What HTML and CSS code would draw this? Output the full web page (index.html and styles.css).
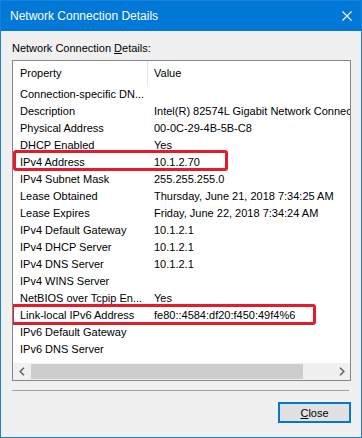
FILE: index.html
```html
<!DOCTYPE html>
<html lang="en">
<head>
    <meta charset="UTF-8">
    <meta name="viewport" content="width=device-width, initial-scale=1.0">
    <title>Network Connection Details</title>
    <link rel="stylesheet" href="styles.css">
</head>
<body>
    <div class="window">
        <div class="titlebar">
            <span class="title">Network Connection Details</span>
            <svg class="close-x" width="10" height="10" viewBox="0 0 10 10">
                <path d="M0.5 0.5 L9.5 9.5 M9.5 0.5 L0.5 9.5" stroke="#fff" stroke-width="1.1" fill="none"/>
            </svg>
        </div>

        <div class="content">
            <div class="label">Network Connection <u>D</u>etails:</div>

            <div class="list">
                <div class="row header">
                    <div class="cell">Property</div>
                    <div class="cell value">Value</div>
                </div>
                <div id="rows"></div>

                <div class="scrollbar">
                    <div class="arrow">
                        <svg width="6" height="9" viewBox="0 0 6 9"><path d="M5 0.8 L1.2 4.5 L5 8.2" stroke="#606060" stroke-width="1.5" fill="none"/></svg>
                    </div>
                    <div class="thumb"></div>
                    <div class="arrow right">
                        <svg width="6" height="9" viewBox="0 0 6 9"><path d="M1 0.8 L4.8 4.5 L1 8.2" stroke="#606060" stroke-width="1.5" fill="none"/></svg>
                    </div>
                </div>
            </div>

            <div class="separator"></div>

            <div class="footer">
                <button class="btn"><u>C</u>lose</button>
            </div>
        </div>
    </div>

    <script>
        const details = [
            ["Connection-specific DN...", ""],
            ["Description", "Intel(R) 82574L Gigabit Network Connection"],
            ["Physical Address", "00-0C-29-4B-5B-C8"],
            ["DHCP Enabled", "Yes"],
            ["IPv4 Address", "10.1.2.70", "mark-ipv4"],
            ["IPv4 Subnet Mask", "255.255.255.0"],
            ["Lease Obtained", "Thursday, June 21, 2018 7:34:25 AM"],
            ["Lease Expires", "Friday, June 22, 2018 7:34:24 AM"],
            ["IPv4 Default Gateway", "10.1.2.1"],
            ["IPv4 DHCP Server", "10.1.2.1"],
            ["IPv4 DNS Server", "10.1.2.1"],
            ["IPv4 WINS Server", ""],
            ["NetBIOS over Tcpip En...", "Yes"],
            ["Link-local IPv6 Address", "fe80::4584:df20:f450:49f4%6", "mark-ipv6"],
            ["IPv6 Default Gateway", ""],
            ["IPv6 DNS Server", ""]
        ];

        const rows = document.getElementById("rows");

        details.forEach(item => {
            const row = document.createElement("div");
            row.classList.add("row");

            const prop = document.createElement("div");
            prop.classList.add("cell");
            prop.textContent = item[0];

            const val = document.createElement("div");
            val.classList.add("cell", "value");
            val.textContent = item[1];

            row.appendChild(prop);
            row.appendChild(val);

            if (item[2]) {
                const mark = document.createElement("span");
                mark.classList.add("mark", item[2]);
                row.appendChild(mark);
            }

            rows.appendChild(row);
        });
    </script>
</body>
</html>
```

FILE: styles.css
```css
body {
    margin: 0;
    font-family: "Liberation Sans", Arial, sans-serif;
    font-size: 11px;
    color: #000;
    background-color: #f0f0f0;
}

.window {
    width: 362px;
    height: 438px;
    box-sizing: border-box;
    border: 1px solid #1a7fd6;
    background-color: #f0f0f0;
    display: flex;
    flex-direction: column;
}

.titlebar {
    height: 30px;
    background-color: #0078d7;
    color: #fff;
    display: flex;
    align-items: center;
    justify-content: space-between;
    padding: 0 9px 0 9px;
    flex-shrink: 0;
}

.title {
    font-size: 12px;
    margin-top: -1px;
}

.close-x {
    margin-top: -1px;
}

.content {
    padding: 9px 10px 0 11px;
}

.label {
    line-height: 16px;
    height: 16px;
}

.label u {
    text-decoration-thickness: 1px;
}

.list {
    margin-top: 4px;
    width: 339px;
    height: 321px;
    box-sizing: border-box;
    border: 1px solid #828790;
    background-color: #fff;
    display: flex;
    flex-direction: column;
    overflow: hidden;
}

.row {
    position: relative;
    display: grid;
    grid-template-columns: 134px 1fr;
    height: 17px;
    line-height: 17px;
}

.row.header {
    height: 25px;
    line-height: 24px;
}

.cell {
    padding-left: 7px;
    white-space: nowrap;
    overflow: hidden;
}

.cell.value {
    padding-left: 7px;
}

.header .cell.value {
    border-left: 1px solid #e5e5e5;
    padding-left: 6px;
}

.mark {
    position: absolute;
    height: 21px;
    box-sizing: border-box;
    border: 3px solid #e51b2b;
    border-radius: 3px;
}

.mark-ipv4 {
    left: 0;
    top: -4px;
    width: 215px;
}

.mark-ipv6 {
    left: -2px;
    top: -3px;
    width: 305px;
}

.scrollbar {
    margin-top: auto;
    height: 17px;
    display: flex;
    align-items: center;
    background-color: #f0f0f0;
}

.arrow {
    width: 17px;
    height: 17px;
    display: flex;
    justify-content: center;
    align-items: center;
}

.arrow.right {
    margin-left: auto;
}

.thumb {
    margin-left: 1px;
    width: 272px;
    height: 15px;
    background-color: #cdcdcd;
}

.separator {
    margin-top: 9px;
    width: 337px;
    height: 1px;
    background-color: #a0a0a0;
}

.footer {
    margin-top: 11px;
    width: 339px;
    display: flex;
    justify-content: flex-end;
}

.btn {
    width: 73px;
    height: 21px;
    box-sizing: border-box;
    border: 2px solid #0078d7;
    background-color: #e1e1e1;
    font-family: "Liberation Sans", Arial, sans-serif;
    font-size: 11px;
    color: #000;
    padding: 0;
}
```
